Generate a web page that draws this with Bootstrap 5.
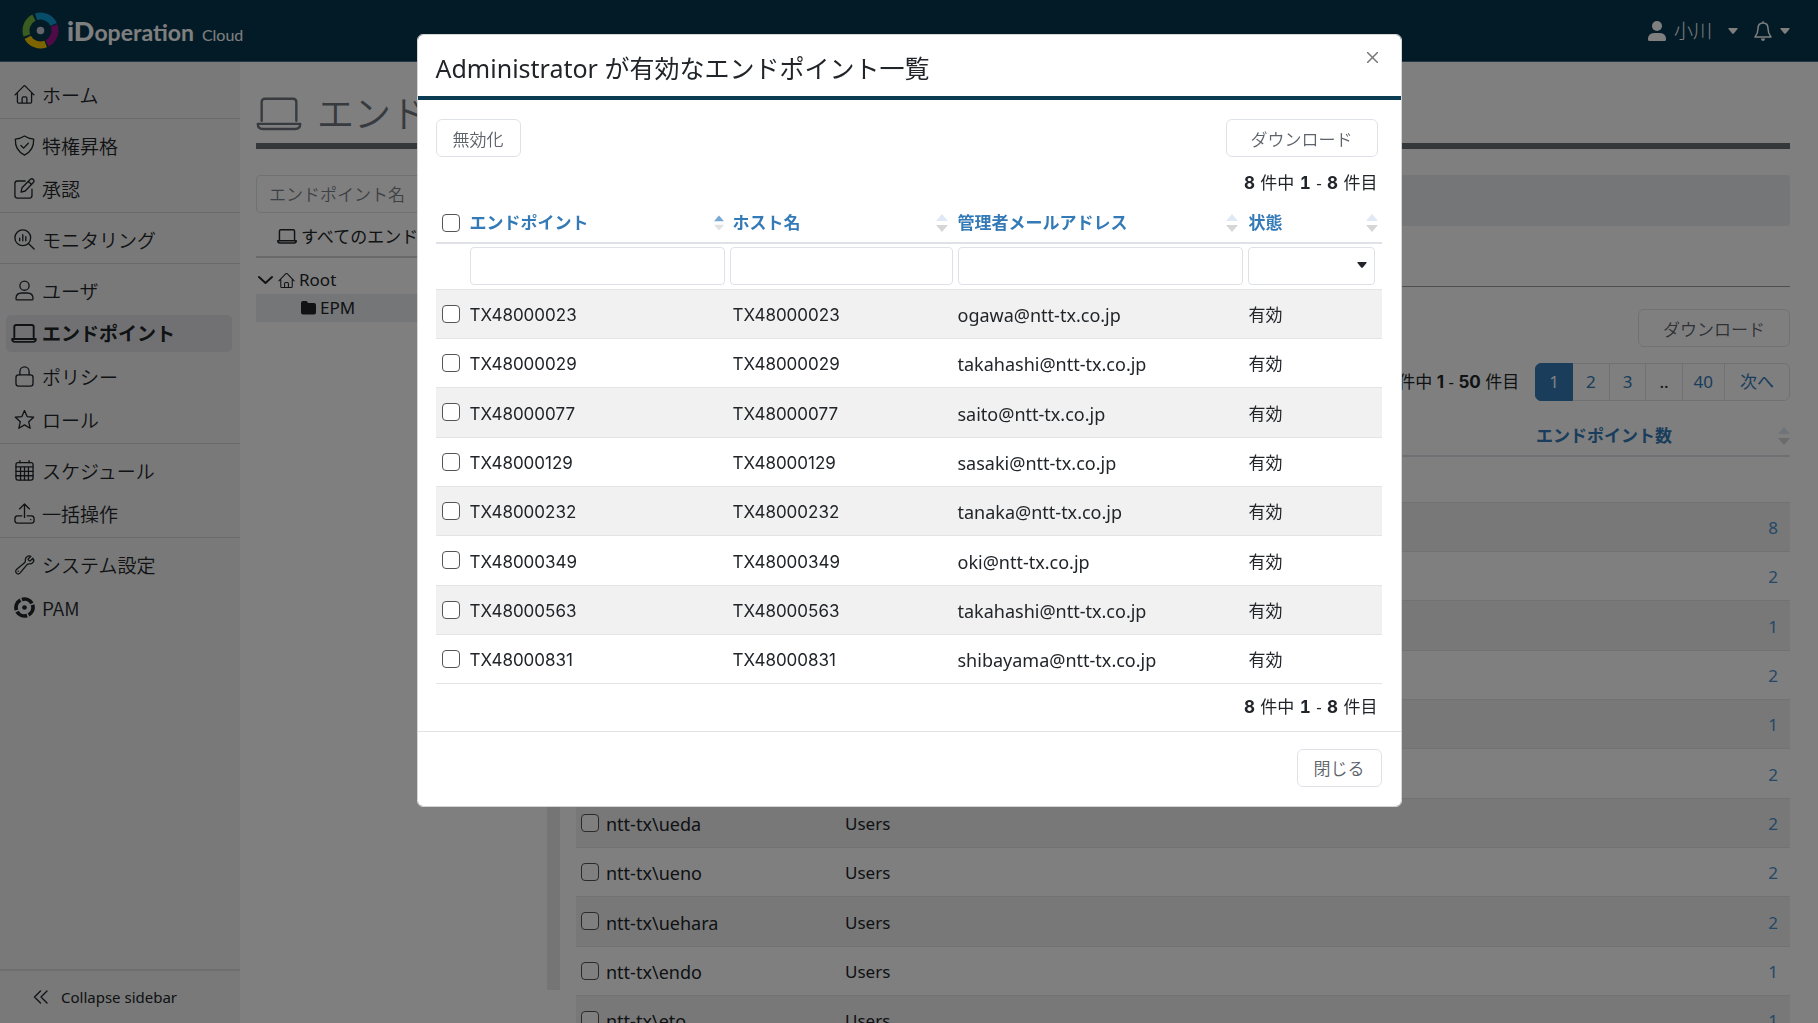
<!DOCTYPE html>
<html lang="ja">
<head>
<meta charset="utf-8">
<meta name="viewport" content="width=device-width, initial-scale=1">
<title>iDoperation Cloud</title>
<link href="https://cdn.jsdelivr.net/npm/bootstrap@5.3.0/dist/css/bootstrap.min.css" rel="stylesheet">
<style>
:root{--ink:#212529;--navy:#06364e;--blue:#337ab7;--line:#dee2e6;--sub:#5c636a}
body{font-family:"Noto Sans","Noto Sans CJK JP",sans-serif;font-size:17px;line-height:24px;color:var(--ink);background:#fff}
a{text-decoration:none;color:inherit}
svg{display:block;flex:none}
.line-icon{fill:none;stroke:currentColor;stroke-width:1;stroke-linecap:round;stroke-linejoin:round}
.heavy-icon{stroke-width:2}
.mid-icon{stroke-width:1.4}

.top-bar{height:62px;padding:0 28px 0 22px;background:var(--navy);border-bottom:1px solid #4a6f88;color:#fff}
.brand-name{font-family:Lato,sans-serif;font-weight:900;font-size:27px;line-height:36px;padding-top:4px;color:#fff}
.brand-name span{font-size:23px;font-weight:700}
.brand-name small{font-size:16px;font-weight:400;margin-left:8px}
.user-name{font-size:19px;font-weight:300}

.side-bar{width:240px;background:#f2f2f2;flex:none}
.side-group{padding:5px 0 2px;border-bottom:1px solid #d2d2d2}
.side-group:first-child{padding-top:11px}
.side-group:last-child{border:0}
.side-link{margin:3px 8px 3px 6px;height:37px;padding-left:5px;gap:5px;border-radius:5px;font-size:19px;font-weight:350}
.side-link:not(.current){font-family:"Noto Sans CJK JP",sans-serif}
.side-link.current{background:#e2e3e6;font-weight:700}
.side-icon{width:26px}
.side-fold{height:54px;border-top:2px solid #dcdcdc;padding-left:33px;gap:12px;font-size:15px}

.content-area{padding:17px 28px 0 16px;min-width:0}
.page-title{font-size:37px;line-height:64px;height:70px;padding-top:6px;font-weight:350;color:#6f757c;border-bottom:6px solid #6b7077;gap:15px}
.work-area{padding-top:26px}
.tree-pane{width:291px}
.form-control,.form-select{height:38px;font-size:17px;border-color:var(--line);border-radius:4px}
.form-control::placeholder{color:#7b8188;font-weight:350}
.tree-all{height:45px;padding:4px 0 0 21px;gap:4px;border-bottom:2px solid #d2d2d2}
.tree-row{height:28px;gap:4px}
.tree-row.picked{background:#e9ecef;padding-left:45px}
.drag-bar{width:13px;background:#ebebeb;margin-bottom:33px}
.list-pane{margin-left:16px;min-width:0}
.notice-strip{height:51px;background:#e9ecef;border-radius:4px}
.rule-line{height:1px;margin:60px 0 22px;background:#9a9ea2}

.btn-plain{--bs-btn-color:var(--sub);--bs-btn-bg:#fff;--bs-btn-border-color:var(--line);--bs-btn-hover-bg:#f4f5f6;--bs-btn-hover-border-color:var(--line);height:38px;padding:3px 16px 0;font-size:17px;line-height:24px;border-radius:6px;font-weight:350}
.btn-wide{padding:3px 24px 0}
.pagination{--bs-pagination-font-size:17px;--bs-pagination-color:var(--blue);--bs-pagination-active-bg:var(--blue);--bs-pagination-active-border-color:var(--blue);--bs-pagination-border-color:var(--line);--bs-pagination-padding-x:13px;--bs-pagination-padding-y:6px;--bs-pagination-border-radius:6px}
.page-link{height:38px}
.page-item:nth-child(5) .page-link{padding:6px 11px}
.page-item:last-child .page-link{padding:6px 15px}

.grid-table{table-layout:fixed;margin:0;--bs-table-striped-bg:#f1f1f1;border-color:#e2e4e6;color:var(--ink)}
.grid-table>:not(caption)>*>*{padding:0;vertical-align:middle}
.grid-table thead th{height:39px;color:var(--blue);font-weight:700;border-bottom:2px solid #dfe1e6}
.grid-table tbody tr{height:49px}
.grid-table tbody tr:nth-child(3n){height:50px}
.grid-table tbody td{padding-top:3px}
.grid-table tbody td:first-child{padding-top:0}
.grid-table .filter-row td{height:46px;padding:0 3px 0 2px;background:#fff}
.grid-table .filter-row td:nth-child(2){padding-left:0}
.grid-table .filter-row td:last-child{padding-right:7px}
.form-check-input{display:block;width:18px;height:18px;margin:0 0 0 5px;border:1px solid #555;border-radius:4px!important}
.ends-table .form-check-input{margin-left:6px}
.sort-mark{width:12px;height:18px;--up:#dfe8f4;--down:#d6d6d6}
.sort-mark.rising{width:10px;--up:#77a7d3;--down:#e2e2e2}
.ends-table .pad-host{padding-left:5px!important}
.ends-table .pad-mail{padding-left:2px!important}
.ends-table .pad-state{padding-left:3px!important}
.id-text,.tally b,.pager-line b{font-family:Inter,sans-serif}
.tally b{margin:0 1px;font-variant-numeric:tabular-nums}
.long-text{font-size:18px}
.count-link{padding-right:12px!important}
.count-link a{color:#4a90cc}
.caret-select{--bs-form-select-bg-img:none;background:none}
.select-wrap svg{right:8px;top:15px;pointer-events:none}

.modal-dialog{max-width:985px;margin:34px auto}
.modal-content{border:1px solid #d5d5d5;border-radius:6px;color:var(--ink)}
.modal-header{padding:17px 23px 12px 18px;border-bottom:4px solid #0b3c52;border-radius:0}
.modal-title{font-size:25px;line-height:32px;font-weight:400}
.close-x{background:none;border:0;padding:0;color:#777}
.modal-body{padding:19px 19px 0 18px}
.tally{height:47px;padding:0 4px}
.modal-footer{padding:17px 19px 19px;border-color:#e2e2e2}
.modal-footer>*{margin:0}
</style>
<script src="https://cdn.jsdelivr.net/npm/bootstrap@5.3.0/dist/js/bootstrap.bundle.min.js"></script>
</head>
<body class="modal-open overflow-hidden">
<svg width="0" height="0" class="position-absolute" aria-hidden="true">
  <symbol id="i-home" viewBox="0 0 16 16"><path d="M.8 8.3 7.4 1.6q.6-.5 1.2 0l6.6 6.7M2.6 7v6.6q0 1 1 1h8.8q1 0 1-1V7M6.2 14.4v-3.600q0-1 1-1h1.600q1 0 1 1v3.600"/></symbol>
  <symbol id="i-shield" viewBox="0 0 16 16"><path d="M8 .8C6 2.2 3.8 2.9 1 3.1.8 9 3 13 8 15.3c5-2.3 7.200-6.300 7-12.200C12.200 2.900 10 2.200 8 .8zM5.300 8l2 2 3.600-3.700"/></symbol>
  <symbol id="i-edit" viewBox="0 0 16 16"><path d="M8.500 2.300H2.600Q.7 2.300.7 4.200v9.200q0 1.900 1.900 1.900h9.200q1.900 0 1.900-1.900V8.500M5.400 10.700l.7-3.300L12.500 1q1.200-.9 2.200.1t.2 2.200L8.500 9.900zM11 2.600l2.400 2.400"/></symbol>
  <symbol id="i-watch" viewBox="0 0 16 16"><circle cx="6.700" cy="6.700" r="6"/><path d="m11 11 4.300 4.300M4.300 7v2M6.700 4.300V9M9 5.800V9"/></symbol>
  <symbol id="i-user" viewBox="0 0 16 16"><circle cx="8" cy="4.300" r="3.500"/><path d="M1.500 14.200q0-4.300 4.500-4.300h4q4.500 0 4.500 4.300 0 1-1 1h-11q-1 0-1-1z"/></symbol>
  <symbol id="i-laptop" viewBox="0 0 27 20"><path d="M3.300 14V3q0-2 2-2h16.400q2 0 2 2v11M1 15.800h25q0 3-3 3H4q-3 0-3-3z"/></symbol>
  <symbol id="i-lock" viewBox="0 0 16 16"><rect x="1.500" y="6.700" width="13" height="8.600" rx="2"/><path d="M4.500 6.700V4.200a3.500 3.500 0 0 1 7 0v2.500"/></symbol>
  <symbol id="i-star" viewBox="0 0 16 16"><path d="m8 1.200 2 4.600 5 .5-3.800 3.400 1.100 5L8 12.100l-4.300 2.600 1.100-5L1 6.300l5-.5z"/></symbol>
  <symbol id="i-calendar" viewBox="0 0 16 16"><rect x="1.500" y="2" width="13" height="13.300" rx="1.500"/><path d="M1.500 5.200h13M1.500 8.600h13M1.500 12h13M5 5.200v10M8 5.200v10M11 5.200v10M4.500.5V2M11.500.5V2"/></symbol>
  <symbol id="i-upload" viewBox="0 0 16 16"><path d="M8 11V.8M4.200 4.500 8 .8l3.800 3.700M6 9.800H2.500Q.7 10 .7 12v1.300q0 2 2 2h10.600q2 0 2-2V12q0-2-1.800-2.200H10M12.600 12.700h.2"/></symbol>
  <symbol id="i-wrench" viewBox="0 0 24 24"><path stroke-width="1.500" d="M22.750 6.750a4.500 4.500 0 0 1-4.884 4.484c-1.076-.091-2.264.071-2.950.904l-8.152 9.684a2.548 2.548 0 1 1-3.986-3.986l9.284-7.752c.833-.686.995-1.874.904-2.950a4.500 4.500 0 0 1 6.336-4.486l-3.276 3.276a3.004 3.004 0 0 0 2.250 2.250l3.276-3.276c.256.565.398 1.192.398 1.852ZM4.800 19.700h.1"/></symbol>
  <symbol id="i-ring" viewBox="0 0 36 36"><circle cx="18" cy="18" r="14.500" fill="none" stroke="currentColor" stroke-width="6.500" pathLength="100" stroke-dasharray="22 3" transform="rotate(-108 18 18)"/><circle cx="18" cy="18" r="4" fill="currentColor"/></symbol>
  <symbol id="i-caret" viewBox="0 0 10 6"><path d="M1 0h8q1 .3.500 1L5.800 5.400Q5 6.200 4.200 5.400L.5 1Q0 .3 1 0z" fill="currentColor"/></symbol>
  <symbol id="i-sort" viewBox="0 0 12 18"><path d="M6 0l6 7H0z" style="fill:var(--up)"/><path d="M0 11h12l-6 7z" style="fill:var(--down)"/></symbol>
</svg>

<div class="d-flex flex-column vh-100 overflow-hidden">
  <header class="top-bar d-flex align-items-center justify-content-between flex-shrink-0">
    <a href="#" class="d-flex align-items-center gap-2">
      <svg width="37" height="37" viewBox="0 0 37 37" fill="none" stroke-width="7">
        <g stroke-dasharray="23 77">
          <circle cx="18.500" cy="18.500" r="14.500" pathLength="100" stroke="#109bd0" transform="rotate(-108 18.500 18.500)"/>
          <circle cx="18.500" cy="18.500" r="14.500" pathLength="100" stroke="#a0148c" transform="rotate(-20 18.500 18.500)"/>
          <circle cx="18.500" cy="18.500" r="14.500" pathLength="100" stroke="#fcc800" transform="rotate(69 18.500 18.500)"/>
          <circle cx="18.500" cy="18.500" r="14.500" pathLength="100" stroke="#74b83c" transform="rotate(160 18.500 18.500)"/>
        </g>
        <circle cx="18.500" cy="18.500" r="3.800" fill="#c8ccd6" stroke="none"/>
      </svg>
      <div class="brand-name">iD<span>operation</span><small>Cloud</small></div>
    </a>
    <nav class="d-flex align-items-center">
      <a href="#" class="d-flex align-items-center">
        <svg width="18" height="20" viewBox="0 0 18 20" fill="#fff"><circle cx="9" cy="5" r="5"/><path d="M0 18.500Q0 12 6 12h6q6 0 6 6.500 0 1.500-1.500 1.500h-15Q0 20 0 18.500z"/></svg>
        <span class="user-name ms-2">小川</span>
        <svg class="ms-3" width="10" height="6"><use href="#i-caret"/></svg>
      </a>
      <a href="#" class="d-flex align-items-center ms-3" aria-label="通知">
        <svg width="18" height="20" viewBox="0 0 18 20" fill="none" stroke="#fff" stroke-width="1.500" stroke-linejoin="round"><path d="M9 2C5.500 2 4 4.500 4 7.500c0 5-1.800 7-3 8.500h16c-1.200-1.500-3-3.500-3-8.500C14 4.500 12.500 2 9 2zM9 .3V2"/><path d="M6.800 17.500h4.400Q10.500 20 9 20t-2.200-2.500z" fill="#fff" stroke="none"/></svg>
        <svg class="ms-2" width="10" height="6"><use href="#i-caret"/></svg>
      </a>
    </nav>
  </header>

  <div class="d-flex flex-grow-1 overflow-hidden">
    <aside class="side-bar d-flex flex-column">
      <nav id="sideNav"></nav>
      <a href="#" class="side-fold d-flex align-items-center mt-auto">
        <svg class="line-icon mid-icon" width="16" height="16" viewBox="0 0 16 16"><path d="M7.500 2 1.500 8l6 6M14 2 8 8l6 6"/></svg>Collapse sidebar
      </a>
    </aside>

    <main class="content-area d-flex flex-column flex-grow-1">
      <h1 class="page-title d-flex align-items-center mb-0 flex-shrink-0"><svg class="line-icon mid-icon" width="46" height="34"><use href="#i-laptop"/></svg>エンドポイント</h1>
      <div class="work-area d-flex flex-grow-1 overflow-hidden">
        <section class="tree-pane flex-shrink-0">
          <input class="form-control" type="search" placeholder="エンドポイント名" aria-label="エンドポイント名">
          <a href="#" class="tree-all d-flex align-items-center text-nowrap"><svg class="line-icon heavy-icon" width="20" height="15"><use href="#i-laptop"/></svg>すべてのエンドポイント</a>
          <div class="pt-1 mt-1">
            <a href="#" class="tree-row d-flex align-items-center">
              <svg class="line-icon heavy-icon" width="18" height="18" viewBox="0 0 18 18"><path d="m3 6 6.500 6L16 6"/></svg>
              <svg class="line-icon" width="17" height="17"><use href="#i-home"/></svg>Root</a>
            <a href="#" class="tree-row picked d-flex align-items-center">
              <svg width="15" height="14" viewBox="0 0 15 14" fill="#212529"><path d="M0 2Q0 0 2 0h3q1 0 1.500 1l.5 1h6q2 0 2 2v7.500q0 2-2 2H2q-2 0-2-2z"/></svg>EPM</a>
          </div>
        </section>
        <div class="drag-bar flex-shrink-0"></div>
        <section class="list-pane flex-grow-1">
          <div class="notice-strip"></div>
          <div class="rule-line"></div>
          <div class="text-end"><button type="button" class="btn btn-plain btn-wide">ダウンロード</button></div>
          <div class="pager-line d-flex justify-content-end align-items-center gap-3 mt-3">
            <span><b>2000</b> 件中 <b>1</b> - <b>50</b> 件目</span>
            <ul class="pagination mb-0">
              <li class="page-item active"><a class="page-link" href="#">1</a></li>
              <li class="page-item"><a class="page-link" href="#">2</a></li>
              <li class="page-item"><a class="page-link" href="#">3</a></li>
              <li class="page-item"><span class="page-link text-body">..</span></li>
              <li class="page-item"><a class="page-link" href="#">40</a></li>
              <li class="page-item"><a class="page-link" href="#">次へ</a></li>
            </ul>
          </div>
          <table class="table table-striped grid-table users-table mt-3">
            <colgroup><col style="width:30px"><col style="width:239px"><col><col style="width:254px"></colgroup>
            <thead><tr><th><input class="form-check-input" type="checkbox" aria-label="すべて選択"></th><th>ユーザ</th><th>グループ</th>
              <th><div class="d-flex justify-content-between align-items-center">エンドポイント数<svg class="sort-mark"><use href="#i-sort"/></svg></div></th></tr>
              <tr class="filter-row"><td></td><td></td><td></td><td></td></tr></thead>
            <tbody id="userRows"></tbody>
          </table>
        </section>
      </div>
    </main>
  </div>
</div>

<div class="modal-backdrop show"></div>
<div class="modal show d-block" tabindex="-1" role="dialog" aria-labelledby="endsTitle">
  <div class="modal-dialog">
    <div class="modal-content">
      <div class="modal-header align-items-start">
        <h2 class="modal-title" id="endsTitle">Administrator が有効なエンドポイント一覧</h2>
        <button type="button" class="close-x" aria-label="閉じる"><svg width="11" height="11" viewBox="0 0 11 11" stroke="currentColor" stroke-width="1.500"><path d="m0 0 11 11M11 0 0 11"/></svg></button>
      </div>
      <div class="modal-body">
        <div class="d-flex justify-content-between pe-1">
          <button type="button" class="btn btn-plain">無効化</button>
          <button type="button" class="btn btn-plain btn-wide">ダウンロード</button>
        </div>
        <div class="tally d-flex align-items-center justify-content-end pt-1"><span><b>8</b> 件中 <b>1</b> - <b>8</b> 件目</span></div>
        <table class="table table-striped grid-table ends-table">
          <colgroup><col style="width:34px"><col style="width:258px"><col style="width:228px"><col><col style="width:136px"></colgroup>
          <thead>
            <tr>
              <th><input class="form-check-input" type="checkbox" aria-label="すべて選択"></th>
              <th><div class="d-flex justify-content-between align-items-center pe-1">エンドポイント<svg class="sort-mark rising"><use href="#i-sort"/></svg></div></th>
              <th class="pad-host"><div class="d-flex justify-content-between align-items-center pe-2">ホスト名<svg class="sort-mark"><use href="#i-sort"/></svg></div></th>
              <th class="pad-mail"><div class="d-flex justify-content-between align-items-center pe-2">管理者メールアドレス<svg class="sort-mark"><use href="#i-sort"/></svg></div></th>
              <th class="pad-state"><div class="d-flex justify-content-between align-items-center pe-1">状態<svg class="sort-mark"><use href="#i-sort"/></svg></div></th>
            </tr>
            <tr class="filter-row">
              <td></td>
              <td><input class="form-control" type="text" aria-label="エンドポイント"></td>
              <td><input class="form-control" type="text" aria-label="ホスト名"></td>
              <td><input class="form-control" type="text" aria-label="管理者メールアドレス"></td>
              <td><div class="select-wrap position-relative"><select class="form-select caret-select" aria-label="状態"><option></option><option>有効</option><option>無効</option></select><svg class="position-absolute" width="10" height="6"><use href="#i-caret"/></svg></div></td>
            </tr>
          </thead>
          <tbody id="endRows"></tbody>
        </table>
        <div class="tally d-flex align-items-center justify-content-end"><span><b>8</b> 件中 <b>1</b> - <b>8</b> 件目</span></div>
      </div>
      <div class="modal-footer"><button type="button" class="btn btn-plain">閉じる</button></div>
    </div>
  </div>
</div>

<script>
const groups = [
  [['home','ホーム']],
  [['shield','特権昇格'],['edit','承認']],
  [['watch','モニタリング']],
  [['user','ユーザ'],['laptop','エンドポイント'],['lock','ポリシー'],['star','ロール']],
  [['calendar','スケジュール'],['upload','一括操作']],
  [['wrench','システム設定'],['ring','PAM']]
];
document.getElementById('sideNav').innerHTML = groups.map(g => '<div class="side-group d-flex flex-column">' + g.map(([icon, text]) => {
  const on = icon === 'laptop', w = on ? 26 : 21, h = on ? 19 : 21;
  return `<a href="#" class="side-link d-flex align-items-center${on ? ' current' : ''}"${on ? ' aria-current="page"' : ''}><span class="side-icon d-flex justify-content-center"><svg class="${icon === 'ring' ? '' : 'line-icon'}${on ? ' heavy-icon' : ''}" width="${w}" height="${h}"><use href="#i-${icon}"/></svg></span>${text}</a>`;
}).join('') + '</div>').join('');

const users = [['Administrator','Administrators',8],['ntt-tx\\abe','Users',2],['ntt-tx\\aoki','Users',1],['ntt-tx\\arai','Users',2],['ntt-tx\\ikeda','Users',1],['ntt-tx\\ito','Users',2],['ntt-tx\\ueda','Users',2],['ntt-tx\\ueno','Users',2],['ntt-tx\\uehara','Users',2],['ntt-tx\\endo','Users',1],['ntt-tx\\eto','Users',1]];
document.getElementById('userRows').innerHTML = users.map(([n, g, c]) =>
  `<tr><td><input class="form-check-input" type="checkbox" aria-label="${n}"></td><td class="long-text">${n}</td><td>${g}</td><td class="count-link text-end"><a href="#">${c}</a></td></tr>`).join('');

const ends = [['TX48000023','ogawa'],['TX48000029','takahashi'],['TX48000077','saito'],['TX48000129','sasaki'],['TX48000232','tanaka'],['TX48000349','oki'],['TX48000563','takahashi'],['TX48000831','shibayama']];
document.getElementById('endRows').innerHTML = ends.map(([id, m]) =>
  `<tr><td><input class="form-check-input" type="checkbox" aria-label="${id}"></td><td class="id-text">${id}</td><td class="id-text pad-host">${id}</td><td class="long-text pad-mail">${m}@ntt-tx.co.jp</td><td class="pad-state">有効</td></tr>`).join('');
</script>
</body>
</html>
